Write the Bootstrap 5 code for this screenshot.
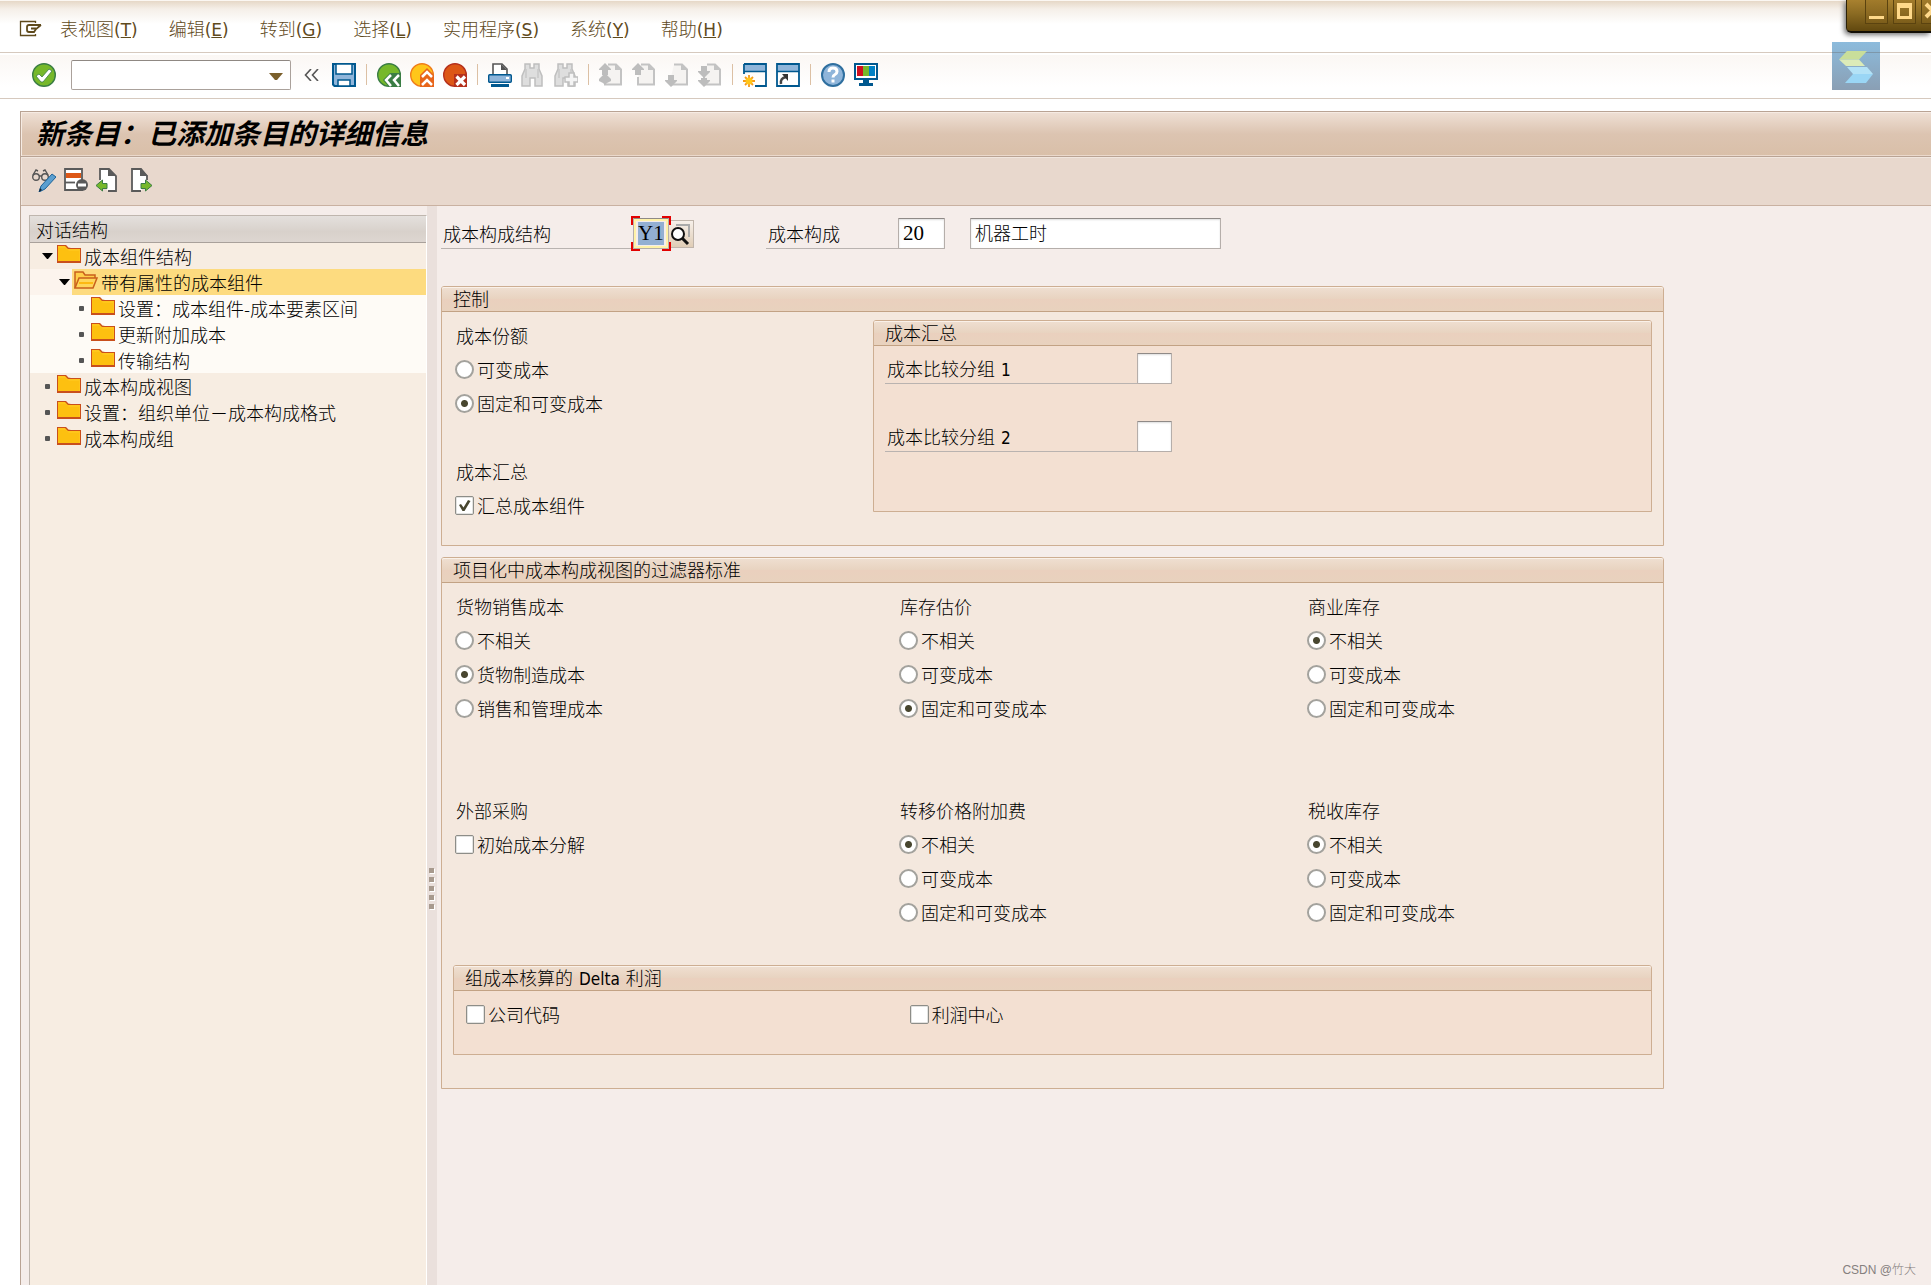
<!DOCTYPE html>
<html lang="zh-CN">
<head>
<meta charset="utf-8">
<meta name="viewport" content="width=device-width, initial-scale=1">
<title>新条目：已添加条目的详细信息</title>
<link href="https://cdn.jsdelivr.net/npm/bootstrap@5.3.0/dist/css/bootstrap.min.css" rel="stylesheet">
<style>
:root{--edge:#cdae92;--line:#b9a394;--cjk:"Noto Sans CJK SC",sans-serif}
body{font-family:var(--cjk);font-size:18px;font-weight:300;line-height:26px;color:#000;background:#fff;overflow-x:hidden}
.lat{font-family:"DejaVu Sans Condensed","DejaVu Sans",var(--cjk);font-size:17px;font-weight:400;margin:0 2px}
.menubar{height:53px;padding-left:19px;padding-top:6px;border-bottom:1px solid #d6c9be;background:linear-gradient(#fbf7f2 0 1px,#e6d8c7 1px,#f5efe8 9px,#fff 24px)}
.menubar .nav{gap:31px;margin-left:17px;padding-top:2px}
.menubar a{color:#5f4a1c;padding:0;line-height:26px;font-family:"DejaVu Sans",var(--cjk)}
.menubar a span{font-size:17px;font-weight:400;font-family:"DejaVu Sans",sans-serif}
.toolrow{height:46px;gap:9px;padding:0 0 2px 32px;border-bottom:1px solid #d6c9be;background:linear-gradient(#fff 0 2px,#fbf7f4 2px,#fff 34px)}
.ico{width:24px;height:24px;padding:0;border:0;background:none;display:flex;flex:none;align-items:center;justify-content:center}
.ico svg{display:block}
.ico.slim{width:23px}
.vsep{width:1px;height:21px;margin:0 1px;background:#dcc0a4}
.combo{width:220px;margin-left:6px}
.combo select{height:30px;border:1px solid #aaa19b;border-top-color:#8f8883;border-radius:2px;background:#fff none;font-size:18px;padding:0 30px 0 6px}
.combo svg{right:8px;top:12px;pointer-events:none}
.stage{margin-left:20px;margin-top:12px;border-left:1px solid var(--line);border-top:1px solid var(--line);background:#f5edea}
.titlebar{height:45px;padding-left:15px;border-bottom:1px solid var(--line);box-shadow:inset 1px 1px 0 #f6ebe3,inset 0 -1px 0 #ebd9cc;background:linear-gradient(#efe0d5,#dcc4b1 50%,#d9bfa8)}
.titlebar h1{font-size:28px;line-height:40px;font-weight:700;font-style:italic;margin:0;color:#000}
.actions{height:49px;gap:8px;padding:11px 0 0 11px;border-bottom:1px solid #c9b1a1;box-shadow:inset 1px 1px 0 #f1e6de;background:#e8d8cd}
.side{width:406px;padding:9px 0 0 8px;flex:none}
.tree{border:1px solid #bfb6ae;border-right-color:#fff;border-bottom:0;background:#f7ede2}
.treehead{height:27px;padding-left:6px;border-bottom:1px solid #a9a19b;background:linear-gradient(#e4e0dd,#d8d1cb 60%,#ddd6d1)}
.node{height:26px;padding-left:12px}
.node.l2{padding-left:29px;background:#fcf4ed}
.node.l3{padding-left:46px;background:#fefbf6}
.node .tw{width:13px;padding:0;border:0;background:none;display:flex;align-items:center;flex:none}
.node .dot{width:5px;height:5px;margin-left:3px;border-radius:1px;background:#555}
.node a{color:#000;text-decoration:none;gap:3px;padding-left:2px;display:flex;flex:1;white-space:nowrap}
.node a svg{margin-top:2px;flex:none}
.node.l2 a{background:#fddb7f}
.split{width:10px;background:#eae0dc;gap:4px;padding-top:662px;flex:none}
.split i{width:5px;height:5px;margin-left:2px;background:#a89a8e;box-shadow:1px 1px 0 #fff}
.work{padding:12px 16px 24px 4px;min-width:0}
.group-wrap{max-width:1223px}
.keys{margin-bottom:37px}
.under{height:31px;padding:2px 0 0 2px;border-bottom:1px solid #b9b3b0}
.fld{height:31px;border:1px solid #b5aeaa;border-top-color:#8f8a87;border-radius:1px;box-shadow:inset 0 1px 2px #ddd;background:#fff;padding:0 4px 3px;font-size:18px;font-weight:300;color:#000}
.num{font-family:"Liberation Serif",serif;font-size:21px;font-weight:400;padding-bottom:0}
.w-struct{width:192px}
.w-comp{width:132px;margin-left:72px}
.w-code{width:47px}
.w-name{width:251px;margin-left:25px}
.key{width:36px}
.key .fld{width:36px;padding:3px 4px;box-shadow:inset 0 0 0 2px #fff2a8;background:#fff2a8 linear-gradient(#93afd2,#93afd2) content-box no-repeat}
.key svg{left:-2px;top:-2px;pointer-events:none}
.f4{display:flex;width:25px;height:28px;padding:0 0 0 1px;border:1px solid #c0b5ab;border-left:0;background:linear-gradient(#f7f0ea,#e0cdb6)}
.group{border:1px solid var(--edge);border-radius:3px 3px 0 0;background:#f4e8de}
.group .group{background:#f3e0d2}
.group>h2{font-size:18px;line-height:22px;font-weight:300;height:25px;margin:0;padding-left:11px;border-bottom:1px solid #c2a284;border-radius:2px 2px 0 0;box-shadow:inset 0 1px 0 #faf1e9;background:linear-gradient(#efdfd1,#e8d3c0 50%,#ead0be 51%,#e8d2be)}
fieldset{padding:0;min-width:0}
legend,.opt{float:none;font-size:18px;font-weight:300;line-height:34px;height:34px;margin:0;width:auto;white-space:nowrap}
legend{padding-left:1px}
.opt{display:flex;align-items:center;gap:3px}
.opt input{appearance:none;width:19px;height:19px;margin:0;flex:none;border:1px solid #8d8d88;background:#fff;box-shadow:inset 0 0 0 1px #e3e3e1}
.opt input[type=radio]{border:2px solid #a3a29d;border-radius:50%;box-shadow:none}
.opt input[type=radio]:checked{background:radial-gradient(circle,#48462f 0 3px,#fff 4px)}
.opt input[type=checkbox]{border-radius:2px}
.opt input[type=checkbox]:checked{background:#fff url("data:image/svg+xml,%3Csvg xmlns='http://www.w3.org/2000/svg' viewBox='0 0 17 17'%3E%3Cpath d='M3 8l2-1 2.500 3.500L12 3l2.500 1L8.500 14H6.500z' fill='%2348462f'/%3E%3C/svg%3E") center/17px}
.ctl{padding:6px 11px 23px 13px}
.ctl .c1{flex:0 1 418px}
.ctl .group{flex:1 1 0;height:192px;margin-top:2px}
.rollup{margin-top:34px}
.cmp{padding:7px 11px 0}
.cmp .under{width:252px}
.cmp .fld{width:35px}
.cmp .second{margin-top:37px}
.second-group{margin-top:11px}
.filters{display:grid;grid-template-columns:444fr 408fr 345fr;row-gap:68px;padding:6px 11px 0 13px}
.filters fieldset{height:136px}
.delta{margin:36px 11px 33px}
.delta .opts{display:grid;grid-template-columns:444fr 742fr;padding:6px 0 23px 12px}
.wm{position:absolute;right:15px;bottom:6px;font-size:12px;line-height:18px;color:#85807e}
.wm span{font-family:"Liberation Sans",sans-serif}
.winbox{position:absolute;right:0;top:0;width:85px;height:33px;padding-left:18px;gap:5px;overflow:hidden;border-bottom:2px solid #120e05;border-left:1px solid #2b2108;border-radius:0 0 0 5px;background:linear-gradient(#a8812f,#8a6a22 45%,#61480f);box-shadow:-2px 2px 5px #777}
.winbox button{width:23px;height:24px;flex:none;padding:0;border:1px solid #5b430f;border-top:0;background:linear-gradient(#a17b2b,#7d5e1b);display:flex}
.badge-s{position:absolute;right:51px;top:42px;width:48px;height:48px;padding:0;border:0}
</style>
<script src="https://cdn.jsdelivr.net/npm/bootstrap@5.3.0/dist/js/bootstrap.bundle.min.js"></script>
</head>
<body class="position-relative min-vh-100 d-flex flex-column">
<svg width="0" height="0" class="position-absolute" aria-hidden="true">
 <symbol id="folder" viewBox="0 0 24 18"><path d="M0 0h9l3 3h12v15H0z" fill="#c94f1c"/><path d="M1 1h7l3 3h12v12H1z" fill="#ffc61a"/><path d="M1 3h8l3 3h10v10H1z" fill="#fdc010"/><path d="M11 2l3 1h-2z" fill="#e0b060"/></symbol>
 <symbol id="folderopen" viewBox="0 0 24 18"><path d="M1 17V1h8l2 3h10v4" fill="#ffcf4a" stroke="#c9601c" stroke-width="1.5"/><path d="M1 17L5 7h18l-4 10z" fill="#ffd65a" stroke="#c9601c" stroke-width="1.5"/><path d="M5 12h14" stroke="#fdb913" stroke-width="2"/></symbol>
 <symbol id="pageg" viewBox="0 0 24 24"><path d="M9 1.500h8l5 5V21.500H6V14" fill="#f5f3f1" stroke="#c3c3c3" stroke-width="2"/><path d="M16 1v6h6z" fill="#c3c3c3"/></symbol>
 <symbol id="upg" viewBox="0 0 12 12"><path d="M6 0l6 6v1H9v5H3V7H0V6z" fill="#bdbdbd"/></symbol>
 <symbol id="bino" viewBox="0 0 24 24"><path d="M4 1h5v4h4V1h5v5l3 7v10h-7v-8h-5v8H1V13l3-7z" fill="#dedede" stroke="#bfbfbf" stroke-width="1.500"/><path d="M5 6v9M17 6v9" stroke="#c8c8c8" stroke-width="1.500"/></symbol>
</svg>

<header>
 <nav class="menubar d-flex align-items-center">
  <button class="ico" aria-label="菜单"><svg width="24" height="18" viewBox="0 0 24 18" fill="none" stroke="#5f4a1c"><path d="M16.500 3V1.500H1.500v14h15V14" stroke-width="1.300"/><path d="M22 5H10Q8 5 8 7v3q0 2 2 2h5l2-3 5-4M17 8.500h-5" stroke-width="1.800"/></svg></button>
  <div class="nav">
   <a class="nav-link" href="#">表视图<span>(<u>T</u>)</span></a>
   <a class="nav-link" href="#">编辑<span>(<u>E</u>)</span></a>
   <a class="nav-link" href="#">转到<span>(<u>G</u>)</span></a>
   <a class="nav-link" href="#">选择<span>(<u>L</u>)</span></a>
   <a class="nav-link" href="#">实用程序<span>(<u>S</u>)</span></a>
   <a class="nav-link" href="#">系统<span>(<u>Y</u>)</span></a>
   <a class="nav-link" href="#">帮助<span>(<u>H</u>)</span></a>
  </div>
 </nav>
 <div class="toolrow d-flex align-items-center">
  <button class="ico" aria-label="确认"><svg width="24" height="24" viewBox="0 0 24 24"><circle cx="12" cy="12" r="11.300" fill="#76b82a" stroke="#3a7d44" stroke-width="1.400"/><path d="M4 13l3-2 3 3 7-8 3 2-9 11H9z" fill="#fff" stroke="#3a7d44" stroke-width=".8"/></svg></button>
  <div class="combo position-relative"><select class="form-select" aria-label="命令"><option></option></select><svg class="position-absolute" width="14" height="8" viewBox="0 0 14 8"><path d="M0 1h14L8 8H6z" fill="#7a5f2b"/></svg></div>
  <button class="ico slim" aria-label="收起"><svg width="15" height="12" viewBox="0 0 15 12" fill="none" stroke="#555" stroke-width="1.600"><path d="M7 0L1.500 6 7 12M14 0L8.500 6l5.500 6"/></svg></button>
  <button class="ico" aria-label="保存"><svg width="24" height="24" viewBox="0 0 24 24"><path d="M0 0h24v24H2l-2-2z" fill="#00588f"/><path d="M2 2h20v20H3l-1-1z" fill="#8fb5da"/><path d="M4 1h16v10H4z" fill="#fff" stroke="#00588f" stroke-width="1.500"/><path d="M6 17h12v6H6z" fill="#fff" stroke="#00588f" stroke-width="1.500"/></svg></button>
  <span class="vsep"></span>
  <button class="ico" aria-label="返回"><svg width="24" height="24" viewBox="0 0 24 24"><circle cx="12" cy="12" r="11.300" fill="#76b82a" stroke="#3a7d44" stroke-width="1.400"/><path d="M6 17l7-7h11v14H12z" fill="#3a7d44"/><path d="M14 12l-5 5 5 6M22 12l-5 5 5 6" fill="none" stroke="#fff" stroke-width="2.500"/></svg></button>
  <button class="ico" aria-label="退出"><svg width="24" height="24" viewBox="0 0 24 24"><circle cx="12" cy="12" r="11.300" fill="#ffc61a" stroke="#f07d1a" stroke-width="1.400"/><path d="M10 12l7-7 7 7v12H10z" fill="#e8651a"/><path d="M12 14l5-5 5 5M12 22l5-5 5 5" fill="none" stroke="#fff" stroke-width="2.500"/></svg></button>
  <button class="ico" aria-label="取消"><svg width="24" height="24" viewBox="0 0 24 24"><circle cx="12" cy="12" r="11.300" fill="#dd5716" stroke="#b5301c" stroke-width="1.400"/><path d="M11 11h13v13H11z" fill="#b5301c"/><path d="M13.500 13.500l8.500 8.500M22 13.500L13.500 22" stroke="#fff" stroke-width="3.200"/></svg></button>
  <span class="vsep"></span>
  <button class="ico" aria-label="打印"><svg width="24" height="24" viewBox="0 0 24 24"><path d="M5 11V1h9l5 5v5" fill="#fff" stroke="#555" stroke-width="1.600"/><path d="M13 1v6h6z" fill="#555"/><rect x=".7" y="11.700" width="22.600" height="7.600" rx="1" fill="#8fb5da" stroke="#00588f" stroke-width="1.400"/><path d="M18 14h3v2h-3z" fill="#fff"/><path d="M3 21h18v3H3z" fill="#00588f"/></svg></button>
  <button class="ico" aria-label="查找"><svg width="24" height="24"><use href="#bino"/></svg></button>
  <button class="ico" aria-label="继续查找"><svg width="24" height="24"><use href="#bino"/><path d="M15 10h5v4h4v5h-4v4h-5v-4h-4v-5h4z" fill="#f4f4f4" stroke="#bfbfbf" stroke-width="1.500"/></svg></button>
  <span class="vsep"></span>
  <button class="ico" aria-label="首页"><svg width="24" height="24"><use href="#pageg"/><use href="#upg" width="12" height="12"/><path d="M6 10l6 6v2l-4 2-2 2-2-2-4-2v-2z" fill="#bdbdbd"/></svg></button>
  <button class="ico" aria-label="上一页"><svg width="24" height="24"><use href="#pageg"/><use href="#upg" width="12" height="12"/></svg></button>
  <button class="ico" aria-label="下一页"><svg width="24" height="24"><use href="#pageg"/><path d="M6 24l6-6v-1H9v-5H3v5H0v1z" fill="#bdbdbd"/></svg></button>
  <button class="ico" aria-label="末页"><svg width="24" height="24"><use href="#pageg"/><path d="M6 24l6-6v-1H9v-2H3v2H0v1zM6 15l6-6V8H9V3H3v5H0v1z" fill="#bdbdbd"/></svg></button>
  <span class="vsep"></span>
  <button class="ico" aria-label="新建会话"><svg width="24" height="24" viewBox="0 0 24 24"><path d="M1 1h22v22H12M1 1v10" fill="none" stroke="#00588f" stroke-width="1.800"/><path d="M2 2h20v6H2z" fill="#8fb5da"/><path d="M1 8.500h22" stroke="#00588f" stroke-width="1.500"/><path d="M6 12v12M0 18h12M2 14l8 8M10 14l-8 8" stroke="#f59a1a" stroke-width="1.800"/><circle cx="6" cy="18" r="3.500" fill="#ffc61a"/></svg></button>
  <button class="ico" aria-label="创建快捷方式"><svg width="24" height="24" viewBox="0 0 24 24"><path d="M1 1h22v22H1z" fill="#fff" stroke="#00588f" stroke-width="1.800"/><path d="M2 2h20v6H2z" fill="#8fb5da"/><path d="M1 8.500h22" stroke="#00588f" stroke-width="1.500"/><path d="M5 21q-1-6 5-7" fill="none" stroke="#444" stroke-width="2.500"/><path d="M6 11h6v7z" fill="#333"/></svg></button>
  <span class="vsep"></span>
  <button class="ico" aria-label="帮助"><svg width="24" height="24" viewBox="0 0 24 24"><circle cx="12" cy="12" r="11" fill="#8fb5da" stroke="#2f6f9f" stroke-width="2"/><path d="M8 9q0-4 4-4t4 3.500q0 2-2 3t-2 3" fill="none" stroke="#fff" stroke-width="3"/><path d="M10.500 16.500h3v3h-3z" fill="#fff"/></svg></button>
  <button class="ico" aria-label="定制本地布局"><svg width="24" height="24" viewBox="0 0 24 24"><path d="M0 0h24v17H0z" fill="#00588f"/><path d="M2 2h20v13H2z" fill="#fff"/><path d="M3 3h6v10H3z" fill="#cf1020"/><path d="M9 3h6v10H9z" fill="#76b82a"/><path d="M15 3h6v10h-6z" fill="#0081c6"/><path d="M9 17h6v3h4v3H5v-3h4z" fill="#00588f"/></svg></button>
 </div>
</header>

<div class="stage flex-grow-1 d-flex flex-column">
 <div class="titlebar"><h1>新条目：已添加条目的详细信息</h1></div>
 <div class="actions d-flex">
  <button class="ico" aria-label="显示/更改"><svg width="24" height="24" viewBox="0 0 24 24"><g fill="none" stroke="#555" stroke-width="1.400"><circle cx="4" cy="9" r="3.300"/><circle cx="13" cy="9" r="3.300"/><path d="M7 8h3M1 7l3-5 2 1M16 7l-3-5-2 1"/></g><path d="M7 24l2-6L20 6l4 3-11 12z" fill="#5b9fd0" stroke="#1b6298"/><path d="M7 24l1-4 2 2z" fill="#123"/></svg></button>
  <button class="ico" aria-label="删除"><svg width="24" height="24" viewBox="0 0 24 24"><path d="M1 1h17v21H1z" fill="#fff" stroke="#5a5a5a" stroke-width="1.800"/><path d="M2 5h15v5H2z" fill="#dd5716"/><path d="M1 14.500h10" stroke="#5a5a5a" stroke-width="1.800"/><circle cx="18" cy="17" r="6" fill="#5a5a5a"/><path d="M14 15.500h8v3h-8z" fill="#fff"/></svg></button>
  <button class="ico" aria-label="上一条目"><svg width="24" height="24" viewBox="0 0 24 24"><path d="M4 12V1h9l7 7v15h-8" fill="#fff" stroke="#5a5a5a" stroke-width="1.800"/><path d="M12 0v8h8z" fill="#5a5a5a"/><path d="M0 17.500L6.500 12v3.500H11v5H6.500V23z" fill="#76b82a" stroke="#3a7d44"/></svg></button>
  <button class="ico" aria-label="下一条目"><svg width="24" height="24" viewBox="0 0 24 24"><path d="M19 12V8l-6-7H4v22h9" fill="#fff" stroke="#5a5a5a" stroke-width="1.800"/><path d="M12 0v8h8z" fill="#5a5a5a"/><path d="M24 17.500L17.500 12v3.500H13v5h4.500V23z" fill="#76b82a" stroke="#3a7d44"/></svg></button>
 </div>
 <div class="d-flex flex-grow-1">
  <aside class="side d-flex flex-column">
   <div class="tree flex-grow-1">
    <div class="treehead">对话结构</div>
    <div class="node d-flex"><button class="tw" aria-label="折叠"><svg width="11" height="6"><path d="M0 0h11L6 6H5z"/></svg></button><a href="#"><svg width="24" height="18"><use href="#folder"/></svg>成本组件结构</a></div>
    <div class="node l2 d-flex"><button class="tw" aria-label="折叠"><svg width="11" height="6"><path d="M0 0h11L6 6H5z"/></svg></button><a href="#"><svg width="24" height="18"><use href="#folderopen"/></svg>带有属性的成本组件</a></div>
    <div class="node l3 d-flex"><span class="tw"><i class="dot"></i></span><a href="#"><svg width="24" height="18"><use href="#folder"/></svg>设置：成本组件-成本要素区间</a></div>
    <div class="node l3 d-flex"><span class="tw"><i class="dot"></i></span><a href="#"><svg width="24" height="18"><use href="#folder"/></svg>更新附加成本</a></div>
    <div class="node l3 d-flex"><span class="tw"><i class="dot"></i></span><a href="#"><svg width="24" height="18"><use href="#folder"/></svg>传输结构</a></div>
    <div class="node d-flex"><span class="tw"><i class="dot"></i></span><a href="#"><svg width="24" height="18"><use href="#folder"/></svg>成本构成视图</a></div>
    <div class="node d-flex"><span class="tw"><i class="dot"></i></span><a href="#"><svg width="24" height="18"><use href="#folder"/></svg>设置：组织单位－成本构成格式</a></div>
    <div class="node d-flex"><span class="tw"><i class="dot"></i></span><a href="#"><svg width="24" height="18"><use href="#folder"/></svg>成本构成组</a></div>
   </div>
  </aside>
  <div class="split d-flex flex-column"><i></i><i></i><i></i><i></i><i></i></div>
  <main class="work flex-grow-1">
   <div class="group-wrap">
    <div class="keys d-flex align-items-center">
     <label class="under w-struct" for="k1">成本构成结构</label>
     <div class="key position-relative"><input id="k1" class="fld num d-block" value="Y1"><svg class="position-absolute" width="40" height="35" fill="none" stroke="#e20000" stroke-width="2"><path d="M1 9V1h8M31 1h8v8M1 26v8h8M31 34h8v-8"/></svg></div>
     <button class="f4" aria-label="搜索帮助"><svg width="22" height="26" viewBox="0 0 22 26"><path d="M6 4h13v12" fill="none" stroke="#aaa" stroke-width="2"/><circle cx="8" cy="13" r="6" fill="#fff" stroke="#111" stroke-width="2"/><path d="M12 17l6 6" stroke="#111" stroke-width="3"/></svg></button>
     <label class="under w-comp" for="k2">成本构成</label>
     <input id="k2" class="fld num w-code" value="20">
     <input class="fld w-name" aria-label="名称" value="机器工时">
    </div>

    <section class="group">
     <h2>控制</h2>
     <div class="ctl d-flex align-items-start">
      <div class="c1">
       <fieldset><legend>成本份额</legend>
        <label class="opt"><input type="radio" name="share">可变成本</label>
        <label class="opt"><input type="radio" name="share" checked>固定和可变成本</label>
       </fieldset>
       <fieldset class="rollup"><legend>成本汇总</legend>
        <label class="opt"><input type="checkbox" checked>汇总成本组件</label>
       </fieldset>
      </div>
      <section class="group">
       <h2>成本汇总</h2>
       <div class="cmp">
        <div class="d-flex"><label class="under" for="g1">成本比较分组 <span class="lat">1</span></label><input id="g1" class="fld"></div>
        <div class="d-flex second"><label class="under" for="g2">成本比较分组 <span class="lat">2</span></label><input id="g2" class="fld"></div>
       </div>
      </section>
     </div>
    </section>

    <section class="group second-group">
     <h2>项目化中成本构成视图的过滤器标准</h2>
     <div class="filters">
      <fieldset><legend>货物销售成本</legend>
       <label class="opt"><input type="radio" name="a">不相关</label>
       <label class="opt"><input type="radio" name="a" checked>货物制造成本</label>
       <label class="opt"><input type="radio" name="a">销售和管理成本</label></fieldset>
      <fieldset><legend>库存估价</legend>
       <label class="opt"><input type="radio" name="b">不相关</label>
       <label class="opt"><input type="radio" name="b">可变成本</label>
       <label class="opt"><input type="radio" name="b" checked>固定和可变成本</label></fieldset>
      <fieldset><legend>商业库存</legend>
       <label class="opt"><input type="radio" name="c" checked>不相关</label>
       <label class="opt"><input type="radio" name="c">可变成本</label>
       <label class="opt"><input type="radio" name="c">固定和可变成本</label></fieldset>
      <fieldset><legend>外部采购</legend>
       <label class="opt"><input type="checkbox">初始成本分解</label></fieldset>
      <fieldset><legend>转移价格附加费</legend>
       <label class="opt"><input type="radio" name="d" checked>不相关</label>
       <label class="opt"><input type="radio" name="d">可变成本</label>
       <label class="opt"><input type="radio" name="d">固定和可变成本</label></fieldset>
      <fieldset><legend>税收库存</legend>
       <label class="opt"><input type="radio" name="e" checked>不相关</label>
       <label class="opt"><input type="radio" name="e">可变成本</label>
       <label class="opt"><input type="radio" name="e">固定和可变成本</label></fieldset>
     </div>
     <section class="group delta">
      <h2>组成本核算的 <span class="lat">Delta</span> 利润</h2>
      <div class="opts">
       <label class="opt"><input type="checkbox">公司代码</label>
       <label class="opt"><input type="checkbox">利润中心</label>
      </div>
     </section>
    </section>
   </div>
  </main>
 </div>
</div>

<div class="winbox d-flex">
 <button aria-label="最小化"><svg width="21" height="23"><path d="M3 16h15v3H3z" fill="#ffd98a"/></svg></button>
 <button aria-label="最大化"><svg width="21" height="23"><path d="M3 3h15v16H3zm3 5v8h9V8z" fill="#ffd98a" fill-rule="evenodd"/></svg></button>
 <button aria-label="关闭"><svg width="21" height="23"><path d="M4 4l13 13M17 4L4 17" stroke="#ffd98a" stroke-width="4"/></svg></button>
</div>
<button class="badge-s" aria-label="悬浮窗"><svg class="d-block" width="48" height="48"><defs><linearGradient id="bs" x2="0" y2="1"><stop stop-color="#8cbbdc"/><stop offset="1" stop-color="#8a9fb4"/></linearGradient></defs><path d="M0 0h48v48H0z" fill="url(#bs)"/><path d="M0 10.500h48" stroke="#7d97aa"/><path d="M15 9h20l-8 8.500H7z" fill="#c9de9a"/><path d="M7 17.500h20l6 6.500H14z" fill="#dcebb8"/><path d="M15 25h20l6 7H21z" fill="#b4e2f6"/><path d="M21 32h20l-7 9H13z" fill="#9ad6f5"/></svg></button>
<div class="wm"><span>CSDN @</span>竹大</div>
</body>
</html>
